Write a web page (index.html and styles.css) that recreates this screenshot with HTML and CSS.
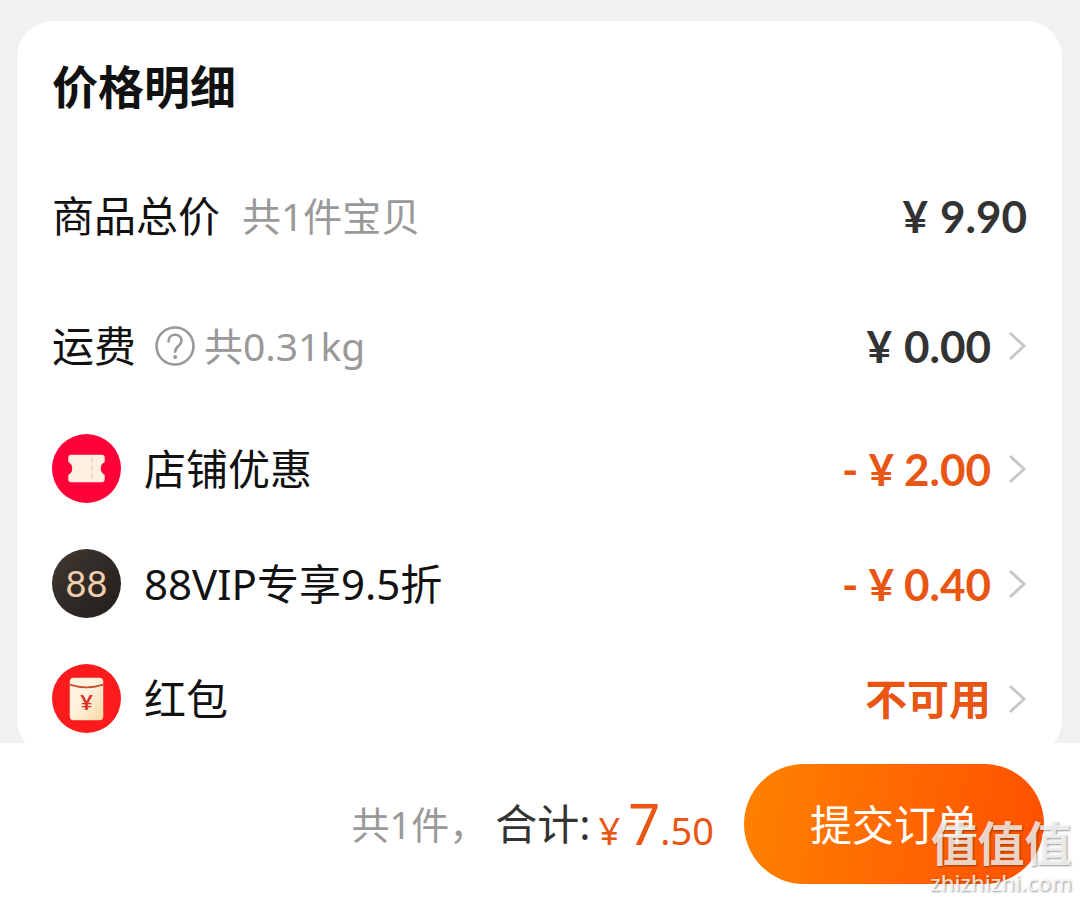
FILE: index.html
```
<!DOCTYPE html>
<html lang="zh-CN">
<head>
    <meta charset="UTF-8">
    <meta name="viewport" content="width=device-width, initial-scale=1.0">
    <title>确认订单</title>
    <link rel="stylesheet" href="styles.css">
</head>
<body>
    <main class="content">
        <section class="price-card">
            <h2 class="card-title">价格明细</h2>

            <div class="row row-tall">
                <span class="label">商品总价</span>
                <span class="note note-goods">共1件宝贝</span>
                <span class="amount"><span>¥</span><span>9.90</span></span>
            </div>

            <div class="row row-tall">
                <span class="label">运费</span>
                <button type="button" class="help" aria-label="运费说明">
                    <svg width="42" height="42" viewBox="0 0 42 42" fill="none" stroke="#999" stroke-width="2.6">
                        <circle cx="21" cy="21" r="18.5"/>
                        <path d="M14.5 16.500c0-4 2.700-6.700 6.500-6.700s6.500 2.500 6.500 6c0 5.300-6.300 5.200-6.300 11" stroke-linecap="round"/>
                        <circle cx="21.200" cy="32" r="2" fill="#999" stroke="none"/>
                    </svg>
                </button>
                <span class="note">共0.31kg</span>
                <button type="button" class="value">
                    <span class="amount"><span>¥</span><span>0.00</span></span>
                    <svg class="arrow" viewBox="0 0 20 32"><path d="M3 3l14 13L3 29"/></svg>
                </button>
            </div>

            <div class="row">
                <svg class="icon" viewBox="0 0 70 70">
                    <circle cx="35" cy="35" r="35" fill="#ff0038"/>
                    <path d="M19.500 21h31a3 3 0 0 1 3 3v4.500q-4 2-4 6.500t4 6.500v4.500a3 3 0 0 1-3 3h-31a3 3 0 0 1-3-3v-4.500q4-2 4-6.500t-4-6.500v-4.500a3 3 0 0 1 3-3z" fill="#fff0e2"/>
                    <path d="M40.500 24v22" stroke="#f3d3bd" stroke-width="2" stroke-dasharray="5 3"/>
                </svg>
                <span class="label">店铺优惠</span>
                <button type="button" class="value">
                    <span class="amount discount"><span>-</span><span>¥</span><span>2.00</span></span>
                    <svg class="arrow" viewBox="0 0 20 32"><path d="M3 3l14 13L3 29"/></svg>
                </button>
            </div>

            <div class="row">
                <span class="icon vip-icon">88</span>
                <span class="label">88VIP专享9.5折</span>
                <button type="button" class="value">
                    <span class="amount discount"><span>-</span><span>¥</span><span>0.40</span></span>
                    <svg class="arrow" viewBox="0 0 20 32"><path d="M3 3l14 13L3 29"/></svg>
                </button>
            </div>

            <div class="row">
                <svg class="icon" viewBox="0 0 70 70">
                    <defs>
                        <linearGradient id="packet" x1="0" y1="0" x2="1" y2="1">
                            <stop offset="0.4" stop-color="#fff3e0"/>
                            <stop offset="1" stop-color="#fbd9a4"/>
                        </linearGradient>
                    </defs>
                    <circle cx="35" cy="35" r="35" fill="#fb1a1c"/>
                    <rect x="18" y="14" width="34" height="43" rx="4" fill="url(#packet)"/>
                    <path d="M18 21q17 5.500 34 0" fill="none" stroke="#c9502f" stroke-width="1.800"/>
                    <text x="35" y="47" class="packet-sign">¥</text>
                </svg>
                <span class="label">红包</span>
                <button type="button" class="value">
                    <span class="unavailable">不可用</span>
                    <svg class="arrow" viewBox="0 0 20 32"><path d="M3 3l14 13L3 29"/></svg>
                </button>
            </div>
        </section>
    </main>

    <footer class="submit-bar">
        <span class="count">共1件，</span>
        <div class="total">
            <span class="total-label">合计:</span>
            <span class="total-price"><span class="sign">¥</span><span class="big">7</span><span class="small">.50</span></span>
        </div>
        <button type="submit" class="submit-btn">提交订单</button>
        <div class="watermark">
            <span class="watermark-name">值值值</span>
            <span class="watermark-site">zhizhizhi.com</span>
        </div>
    </footer>
</body>
</html>
```
FILE: styles.css
```
* {
    box-sizing: border-box;
}
body {
    display: flex;
    flex-direction: column;
    height: 100vh;
    margin: 0;
    background-color: #f1f1f1;
    color: #111;
    font-family: "Noto Sans", "Noto Sans CJK SC", sans-serif;
}
button {
    padding: 0;
    border: none;
    background: none;
    color: inherit;
    font-family: inherit;
    cursor: pointer;
}
.content {
    flex: 1;
    min-height: 0;
    overflow: hidden;
    padding: 21px 18px 0 17px;
}
.price-card {
    background-color: #fff;
    border-radius: 36px;
    padding: 0 35px;
}
.card-title {
    margin: 0;
    height: 130px;
    font-size: 46px;
    font-weight: 700;
    line-height: 130px;
}
.row {
    display: flex;
    align-items: center;
    height: 115px;
}
.row-tall {
    height: 130px;
}
.label {
    font-size: 42px;
    line-height: 60px;
}
.icon {
    flex: none;
    width: 69px;
    height: 69px;
    margin-right: 23px;
}
.vip-icon {
    border-radius: 50%;
    background: linear-gradient(135deg, #403832, #211d1b);
    color: #f0cfae;
    font-family: Lato, sans-serif;
    font-size: 36px;
    line-height: 69px;
    text-align: center;
}
.packet-sign {
    fill: #d9322c;
    font-family: Lato, sans-serif;
    font-size: 22px;
    font-weight: 700;
    text-anchor: middle;
}
.note {
    color: #999;
    font-size: 39px;
    line-height: 60px;
}
.note-goods {
    margin-left: 22px;
}
.help {
    display: flex;
    margin: 0 8px 0 18px;
}
.amount {
    display: flex;
    gap: 12px;
    margin-left: auto;
    color: #333;
    font-family: Lato, sans-serif;
    font-size: 44px;
    font-weight: 700;
    line-height: 60px;
}
.discount {
    gap: 10px;
    color: #e95513;
}
.unavailable {
    color: #e95513;
    font-size: 42px;
    font-weight: 700;
    line-height: 60px;
}
.value {
    display: flex;
    align-items: center;
    gap: 16px;
    margin-left: auto;
}
.arrow {
    width: 20px;
    height: 32px;
    fill: none;
    stroke: #c8c8c8;
    stroke-width: 3;
}
.submit-bar {
    position: relative;
    display: flex;
    align-items: center;
    justify-content: flex-end;
    padding: 21px 36px 16px;
    background-color: #fff;
}
.count {
    color: #999;
    font-size: 38px;
    line-height: 60px;
}
.total {
    display: flex;
    align-items: center;
    gap: 8px;
    margin: 0 30px 0 8px;
}
.total-label {
    color: #333;
    font-size: 42px;
    line-height: 60px;
}
.total-price {
    display: flex;
    align-items: baseline;
    padding-top: 4px;
    color: #e95513;
    font-size: 38px;
    line-height: 60px;
}
.sign {
    margin-right: 8px;
}
.big {
    font-size: 56px;
}
.submit-btn {
    width: 300px;
    height: 120px;
    padding-bottom: 4px;
    border-radius: 60px;
    background: linear-gradient(100deg, #ff8200, #ff4f00);
    color: #fff;
    font-size: 42px;
}
.watermark {
    position: absolute;
    right: 8px;
    bottom: 2px;
    display: flex;
    flex-direction: column;
    align-items: center;
    color: rgba(255, 255, 255, 0.8);
    text-shadow: 1px 1px 2px rgba(0, 0, 0, 0.4);
    pointer-events: none;
}
.watermark-name {
    font-size: 47px;
    font-weight: 700;
    line-height: 46px;
}
.watermark-site {
    font-size: 22px;
    font-weight: 500;
    line-height: 32px;
}
```
